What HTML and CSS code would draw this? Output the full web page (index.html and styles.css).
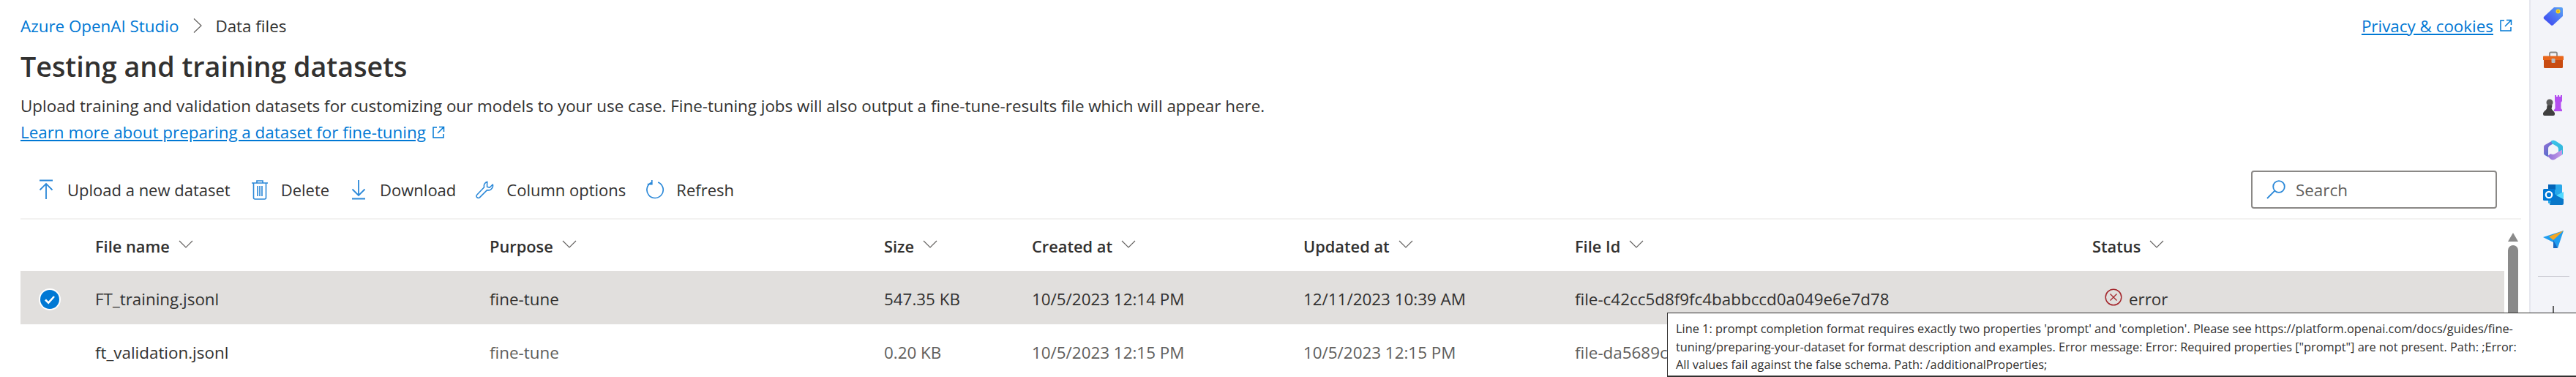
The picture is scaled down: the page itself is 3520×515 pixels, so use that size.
FILE: index.html
```html
<!DOCTYPE html>
<html lang="en">
<head>
    <meta charset="UTF-8">
    <title>Data files - Azure OpenAI Studio</title>
    <link rel="stylesheet" href="styles.css">
</head>
<body>
    <div class="page">
        <main class="main">
            <div class="top-bar">
                <nav class="breadcrumb">
                    <a class="crumb-link">Azure OpenAI Studio</a>
                    <svg class="crumb-sep" viewBox="0 0 12 20"><path d="M1 .5l10 9.500-10 9.500" fill="none" stroke="#605e5c" stroke-width="1.200"/></svg>
                    <span class="crumb-current">Data files</span>
                </nav>
                <a class="privacy-link"><span class="link-text">Privacy &amp; cookies</span>
                    <svg class="ext-icon" viewBox="0 0 18 18"><path d="M7 2H2v14h14v-5M10 1.500h6.500V8M16 2L8 10" fill="none" stroke="#0078d4" stroke-width="1.500"/></svg>
                </a>
            </div>
            <h1 class="heading">Testing and training datasets</h1>
            <p class="description">Upload training and validation datasets for customizing our models to your use case. Fine-tuning jobs will also output a fine-tune-results file which will appear here.</p>
            <a class="learn-link"><span class="link-text">Learn more about preparing a dataset for fine-tuning </span>
                <svg class="ext-icon" viewBox="0 0 18 18"><path d="M7 2H2v14h14v-5M10 1.500h6.500V8M16 2L8 10" fill="none" stroke="#0078d4" stroke-width="1.500"/></svg>
            </a>

            <div class="toolbar">
                <div class="commands">
                    <button class="command">
                        <svg class="command-icon" viewBox="0 0 26 28"><path d="M4 1.500h18M13 27V6M4.500 14.500L13 6l8.500 8.500" fill="none" stroke="#2b88d8" stroke-width="1.800"/></svg>
                        Upload a new dataset
                    </button>
                    <button class="command">
                        <svg class="command-icon" viewBox="0 0 26 28"><path d="M2 5h22M9 5V2h8v3M4.500 5v20a2 2 0 0 0 2 2h13a2 2 0 0 0 2-2V5M10 9v14M13 9v14M16 9v14" fill="none" stroke="#2b88d8" stroke-width="1.600"/></svg>
                        Delete
                    </button>
                    <button class="command">
                        <svg class="command-icon" viewBox="0 0 26 28"><path d="M13 1v21M4.500 13.500L13 22l8.500-8.500M4 26.500h18" fill="none" stroke="#2b88d8" stroke-width="1.800"/></svg>
                        Download
                    </button>
                    <button class="command">
                        <svg class="command-icon" viewBox="0 0 28 28"><path d="M17 2.500c-3.500 1-5.500 4.500-4.500 8L2 21.500c-1.500 1.500-1 3 0 4s2.800 1.200 4 0l10.800-10.800c4 1 8-1.500 8.500-5.700.1-1 0-1.800-.2-2.500l-4.600 4.500-3.700-1V6z" fill="none" stroke="#2b88d8" stroke-width="1.700" stroke-linejoin="round"/></svg>
                        Column options
                    </button>
                    <button class="command">
                        <svg class="command-icon" viewBox="0 0 28 28"><path d="M9 3.500a12 12 0 1 0 9.500-.3M9.500 0v6H3" fill="none" stroke="#2b88d8" stroke-width="1.800"/></svg>
                        Refresh
                    </button>
                </div>
                <div class="search-box">
                    <svg class="search-icon" viewBox="0 0 26 26"><circle cx="17" cy="9" r="7.800" fill="none" stroke="#2b88d8" stroke-width="1.800"/><path d="M11.300 14.700L1 25" stroke="#2b88d8" stroke-width="1.800"/></svg>
                    <span>Search</span>
                </div>
            </div>

            <div class="list">
                <div class="list-rows">
                    <div class="row header-row">
                        <div></div>
                        <div class="col-head">File name <svg class="sort" viewBox="0 0 20 12"><path d="M1 1l9 9 9-9" fill="none" stroke="#605e5c" stroke-width="1.100"/></svg></div>
                        <div class="col-head">Purpose <svg class="sort" viewBox="0 0 20 12"><path d="M1 1l9 9 9-9" fill="none" stroke="#605e5c" stroke-width="1.100"/></svg></div>
                        <div class="col-head">Size <svg class="sort" viewBox="0 0 20 12"><path d="M1 1l9 9 9-9" fill="none" stroke="#605e5c" stroke-width="1.100"/></svg></div>
                        <div class="col-head">Created at <svg class="sort" viewBox="0 0 20 12"><path d="M1 1l9 9 9-9" fill="none" stroke="#605e5c" stroke-width="1.100"/></svg></div>
                        <div class="col-head">Updated at <svg class="sort" viewBox="0 0 20 12"><path d="M1 1l9 9 9-9" fill="none" stroke="#605e5c" stroke-width="1.100"/></svg></div>
                        <div class="col-head">File Id <svg class="sort" viewBox="0 0 20 12"><path d="M1 1l9 9 9-9" fill="none" stroke="#605e5c" stroke-width="1.100"/></svg></div>
                        <div class="col-head">Status <svg class="sort" viewBox="0 0 20 12"><path d="M1 1l9 9 9-9" fill="none" stroke="#605e5c" stroke-width="1.100"/></svg></div>
                    </div>
                    <div class="row data-row selected">
                        <div class="check-cell">
                            <svg class="check" viewBox="0 0 30 30"><circle cx="15" cy="15" r="15" fill="#fff"/><circle cx="15" cy="15" r="13" fill="#0078d4"/><path d="M9 15.500l4.200 4.200L21 11" fill="none" stroke="#fff" stroke-width="2.600"/></svg>
                        </div>
                        <div class="file-name">FT_training.jsonl</div>
                        <div>fine-tune</div>
                        <div>547.35 KB</div>
                        <div>10/5/2023 12:14 PM</div>
                        <div>12/11/2023 10:39 AM</div>
                        <div>file-c42cc5d8f9fc4babbccd0a049e6e7d78</div>
                        <div class="status-cell">
                            <svg class="error-icon" viewBox="0 0 24 24"><circle cx="12" cy="12" r="10.800" fill="none" stroke="#a4262c" stroke-width="1.500"/><path d="M7.500 7.500l9 9M16.500 7.500l-9 9" stroke="#a4262c" stroke-width="1.300"/></svg>
                            error
                        </div>
                    </div>
                    <div class="row data-row">
                        <div></div>
                        <div class="file-name">ft_validation.jsonl</div>
                        <div>fine-tune</div>
                        <div>0.20 KB</div>
                        <div>10/5/2023 12:15 PM</div>
                        <div>10/5/2023 12:15 PM</div>
                        <div>file-da5689c</div>
                        <div></div>
                    </div>
                </div>
                <div class="scrollbar">
                    <div class="scroll-arrow"></div>
                    <div class="scroll-thumb"></div>
                </div>
            </div>
        </main>

        <aside class="sidebar">
            <svg class="side-icon" viewBox="0 0 28 28">
                <defs><linearGradient id="tag" x1="0" y1="1" x2="1" y2="0"><stop offset="0" stop-color="#3b3ff0"/><stop offset="1" stop-color="#5aa4f5"/></linearGradient></defs>
                <path d="M1.500 14.500L15 2h10a2 2 0 0 1 2 2v10L14 26a2.500 2.500 0 0 1-3.500 0L1.500 18a2.500 2.500 0 0 1 0-3.500z" fill="url(#tag)"/>
                <circle cx="20.500" cy="7.500" r="3" fill="#f5d327"/><circle cx="20.500" cy="7.500" r="1.200" fill="#e0a800"/>
            </svg>
            <svg class="side-icon" viewBox="0 0 28 28">
                <path d="M9 8V4a1.500 1.500 0 0 1 1.500-1.500h7A1.500 1.500 0 0 1 19 4v4" fill="none" stroke="#8a8886" stroke-width="1.800"/>
                <path d="M0 8.500a1 1 0 0 1 1-1h26a1 1 0 0 1 1 1V13H0z" fill="#e8661c"/>
                <path d="M1 13h26v9.500a1.500 1.500 0 0 1-1.500 1.500h-23A1.500 1.500 0 0 1 1 22.500z" fill="#c84b11"/>
                <rect x="11.500" y="11" width="5" height="6" rx="1" fill="#b8bcc0"/>
            </svg>
            <svg class="side-icon" viewBox="0 0 28 28">
                <path d="M16 0h2v2h2V0h2v2h2V0h2v8l-1.500 2v8l1.500 2v2H15v-2l1.500-2v-8L16 8z" fill="#b44ff0"/>
                <circle cx="9" cy="10" r="4.500" fill="#5c5c5c"/>
                <path d="M5.500 14h7l-1 4.500c1 2 3.500 3.500 4.500 6v1.500a2 2 0 0 1-2 2H2a2 2 0 0 1-2-2v-1.500c1-2.500 4-4 5-6z" fill="#3f3f3f"/>
            </svg>
            <svg class="side-icon" viewBox="0 0 28 28">
                <defs>
                    <linearGradient id="m365a" x1="0" y1="0" x2="1" y2="1"><stop offset="0" stop-color="#a06fd8"/><stop offset="1" stop-color="#2b6fc4"/></linearGradient>
                    <linearGradient id="m365b" x1="0" y1="0" x2="1" y2="1"><stop offset="0" stop-color="#3ec4ec"/><stop offset="1" stop-color="#2fb5d8"/></linearGradient>
                    <linearGradient id="m365c" x1="0" y1="0" x2="1" y2="0"><stop offset="0" stop-color="#8a6fd8"/><stop offset="1" stop-color="#c89be8"/></linearGradient>
                </defs>
                <path d="M14 0.500L2.500 7A3 3 0 0 0 1 9.500v9A3 3 0 0 0 2.500 21L7 23.500V12c0-2 1-3.500 3-4.500L17 3.500z" fill="url(#m365a)"/>
                <path d="M11 1.500c2-1 4-1 6 0l8.500 5.500A3 3 0 0 1 27 9.500v9a3 3 0 0 1-1.500 2.500L21 17.500V13c0-2-1-3.500-3-4.500L12 5z" fill="url(#m365b)"/>
                <path d="M6 22l4.500-3c1.500 1 3.500 1.300 5.500.300L26 13.500v7L16.500 26.500c-2 1.300-4 1.300-6 0z" fill="url(#m365c)"/>
                <circle cx="14" cy="14" r="5" fill="#f3f4f9"/>
            </svg>
            <svg class="side-icon" viewBox="0 0 28 28">
                <rect x="7" y="0" width="19" height="26" rx="1.500" fill="#28a8ea"/>
                <rect x="7" y="0" width="10" height="7" fill="#0364b8"/>
                <path d="M14 12l14 8v6a2 2 0 0 1-2 2H9z" fill="#0a77c8"/>
                <path d="M28 10v10l-10-5z" fill="#50d9ff"/>
                <rect x="0" y="6" width="16" height="16" rx="1.500" fill="#0078d4"/>
                <circle cx="8" cy="14" r="4.200" fill="none" stroke="#fff" stroke-width="2.200"/>
            </svg>
            <svg class="side-icon" viewBox="0 0 28 28">
                <path d="M0 11L28 2 20 26 14 18z" fill="#1f9df0"/>
                <path d="M8 10L28 2 14 15z" fill="#f5a623"/>
                <path d="M14 15v11l6 0z" fill="#1667c0"/>
            </svg>
            <div class="side-divider"></div>
            <svg class="side-add" viewBox="0 0 20 20"><path d="M10 0v20M0 10h20" stroke="#323130" stroke-width="1.500"/></svg>
        </aside>

        <div class="tooltip">Line 1: prompt completion format requires exactly two properties 'prompt' and 'completion'. Please see https://platform.openai.com/docs/guides/fine-tuning/preparing-your-dataset for format description and examples. Error message: Error: Required properties ["prompt"] are not present. Path: ;Error:<br>All values fail against the false schema. Path: /additionalProperties;</div>
    </div>
</body>
</html>
```
FILE: styles.css
```css
* {
    margin: 0;
    padding: 0;
    box-sizing: border-box;
}

html, body {
    height: 100%;
    overflow: hidden;
}

body {
    font-family: "Open Sans", "Noto Sans", sans-serif;
    color: #323130;
    background: white;
}

.page {
    position: relative;
    display: flex;
    height: 515px;
    overflow: hidden;
}

.main {
    flex: 1;
    min-width: 0;
    padding: 0 11px 0 28px;
}

.top-bar {
    display: flex;
    justify-content: space-between;
    align-items: center;
    height: 70px;
    padding-right: 12px;
}

.breadcrumb {
    display: flex;
    align-items: center;
    font-size: 22.400px;
}

.crumb-link {
    color: #0078d4;
}

.crumb-sep {
    width: 12px;
    height: 20px;
    margin: 0 18px 0 20px;
}

.privacy-link, .learn-link {
    display: flex;
    align-items: center;
    gap: 8px;
    color: #0078d4;
    font-size: 22.400px;
}

.link-text {
    text-decoration: underline;
}

.ext-icon {
    width: 18px;
    height: 18px;
}

.heading {
    font-size: 37.700px;
    font-weight: 600;
    line-height: 42px;
}

.description {
    font-size: 22.400px;
    line-height: 36px;
    margin-top: 15px;
}

.learn-link {
    line-height: 36px;
}

.toolbar {
    display: flex;
    justify-content: space-between;
    align-items: center;
    height: 68px;
    margin-top: 33px;
    padding: 0 0 12px 22px;
    border-bottom: 2px solid #f3f2f1;
}

.commands {
    display: flex;
    gap: 27px;
}

.command {
    display: flex;
    align-items: center;
    gap: 16px;
    border: none;
    background: none;
    font-family: inherit;
    font-size: 22px;
    color: #323130;
}

.command-icon {
    width: 26px;
    height: 28px;
}

.search-box {
    display: flex;
    align-items: center;
    gap: 14px;
    width: 336px;
    height: 52px;
    margin-right: 33px;
    padding-left: 19px;
    border: 2px solid #8a8886;
    border-radius: 4px;
    color: #605e5c;
    font-size: 22.400px;
}

.search-icon {
    width: 26px;
    height: 26px;
}

.list {
    display: flex;
}

.list-rows {
    flex: 1;
    min-width: 0;
}

.row {
    display: grid;
    grid-template-columns: 102px 539px 539px 202px 371px 371px 707px 1fr;
    align-items: center;
    font-size: 22.400px;
}

.header-row {
    height: 70px;
    padding-top: 3px;
}

.col-head {
    display: flex;
    align-items: center;
    gap: 12px;
    font-size: 21.800px;
    font-weight: 600;
    color: #323130;
}

.sort {
    width: 20px;
    height: 12px;
    margin-top: -6px;
}

.data-row {
    height: 73px;
    padding-top: 4px;
    color: #605e5c;
}

.data-row.selected {
    background: #e1dfdd;
    color: #323130;
}

.file-name {
    color: #323130;
}

.check-cell {
    display: flex;
    padding-left: 25px;
}

.check {
    width: 30px;
    height: 30px;
}

.status-cell {
    display: flex;
    align-items: center;
    gap: 9px;
    padding-left: 17px;
}

.error-icon {
    width: 24px;
    height: 24px;
    margin-top: -6px;
}

.scrollbar {
    display: flex;
    flex-direction: column;
    align-items: center;
    width: 23px;
}

.scroll-arrow {
    width: 0;
    height: 0;
    margin-top: 18px;
    border-left: 7px solid transparent;
    border-right: 7px solid transparent;
    border-bottom: 12px solid #8a8a8a;
}

.scroll-thumb {
    width: 14px;
    height: 200px;
    margin-top: 5px;
    background: #8a8a8a;
    border-radius: 7px;
}

.sidebar {
    position: relative;
    display: flex;
    flex-direction: column;
    align-items: center;
    width: 64px;
    padding-top: 8px;
    background: #f3f4f9;
    border-left: 2px solid #e6e7ee;
}

.side-icon {
    width: 28px;
    height: 28px;
    margin-bottom: 33px;
}

.side-divider {
    width: 43px;
    height: 1px;
    margin-top: 3px;
    background: #c8c8d0;
}

.side-add {
    width: 20px;
    height: 20px;
    margin-top: 40px;
}

.tooltip {
    position: absolute;
    left: 2278px;
    top: 427px;
    width: 1244px;
    height: 88px;
    padding: 9px 10px 9px 11px;
    background: white;
    border: 1px solid #323130;
    border-bottom-width: 2px;
    color: #323130;
    font-size: 16.350px;
    line-height: 24.500px;
}
```
